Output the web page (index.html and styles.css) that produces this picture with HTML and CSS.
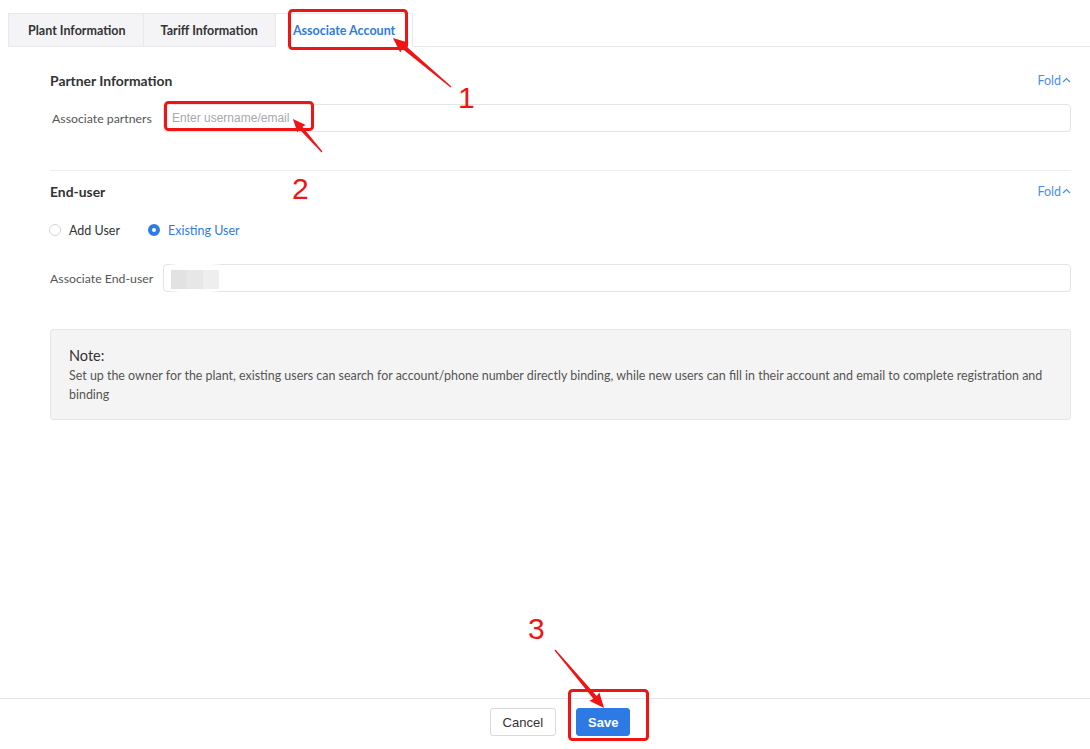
FILE: index.html
```html
<!DOCTYPE html>
<html lang="en">
<head>
  <meta charset="UTF-8">
  <meta name="viewport" content="width=device-width, initial-scale=1.0" />
  <title>Associate Account</title>
  <link rel="stylesheet" href="styles.css">
</head>
<body>
  <div class="page">
    <div class="tabs">
      <div class="tab">Plant Information</div>
      <div class="tab">Tariff Information</div>
      <div class="tab active">Associate Account</div>
    </div>

    <div class="content">
      <section class="block block-partner">
        <div class="block-head">
          <h2>Partner Information</h2>
          <a class="fold">Fold<svg width="9" height="6" viewBox="0 0 9 6"><path d="M1 5 L4.5 1.5 L8 5" fill="none" stroke="currentColor" stroke-width="1.2"/></svg></a>
        </div>
        <div class="field">
          <label class="label-indent">Associate partners</label>
          <input type="text" class="input" placeholder="Enter username/email">
        </div>
      </section>

      <section class="block">
        <div class="block-head">
          <h2>End-user</h2>
          <a class="fold">Fold<svg width="9" height="6" viewBox="0 0 9 6"><path d="M1 5 L4.5 1.5 L8 5" fill="none" stroke="currentColor" stroke-width="1.2"/></svg></a>
        </div>
        <div class="radios">
          <label class="radio"><span class="dot"></span>Add User</label>
          <label class="radio checked"><span class="dot"></span>Existing User</label>
        </div>
        <div class="field">
          <label>Associate End-user</label>
          <div class="input masked"><span class="blur"></span></div>
        </div>
      </section>

      <div class="note">
        <h3>Note:</h3>
        <p>Set up the owner for the plant, existing users can search for account/phone number directly binding, while new users can fill in their account and email to complete registration and binding</p>
      </div>
    </div>

    <div class="footer">
      <button class="btn">Cancel</button>
      <button class="btn primary">Save</button>
    </div>
  </div>

  <!-- red annotation marks drawn over the screenshot -->
  <svg class="marks" width="1090" height="749" viewBox="0 0 1090 749">
    <g fill="none" stroke="#f01414" stroke-width="3">
      <rect x="289.5" y="10.5" width="117" height="38" rx="3"/>
      <rect x="165.5" y="102.5" width="147" height="27" rx="3"/>
      <rect x="569.5" y="690.5" width="78" height="49" rx="3"/>
    </g>
    <g fill="#f01414">
      <polygon transform="translate(451 87) rotate(-139.8)" points="0,-0.6 62,-2.2 61,-6.5 76,0 61,6.5 62,2.2 0,0.6"/>
      <polygon transform="translate(322 152) rotate(-131.3)" points="0,-0.6 32,-2 31,-5.5 44,0 31,5.5 32,2 0,0.6"/>
      <polygon transform="translate(555 650) rotate(49.8)" points="0,-0.6 62,-2.2 61,-6.5 76,0 61,6.5 62,2.2 0,0.6"/>
    </g>
    <g class="mark-num" fill="#f01414">
      <text x="458" y="108">1</text>
      <text x="292" y="199">2</text>
      <text x="528" y="639">3</text>
    </g>
  </svg>
</body>
</html>
```

FILE: styles.css
```css
* {
  box-sizing: border-box;
}

body {
  margin: 0;
  position: relative;
  font-family: Lato, "Open Sans", sans-serif;
  color: #333;
  background: white;
}

.page {
  display: flex;
  flex-direction: column;
  height: 749px;
}

.tabs {
  display: flex;
  margin: 13px 0 0 8px;
  border-bottom: 1px solid #e9e9ec;
}

.tab {
  height: 34px;
  padding: 0 17px;
  display: flex;
  align-items: center;
  font-size: 12.5px;
  font-weight: 700;
  color: #333;
  background: #f4f4f6;
  border: 1px solid #e9e9ec;
  border-left: none;
  margin-bottom: -1px;
}

.tab:first-child {
  border-left: 1px solid #e9e9ec;
  padding-left: 19px;
}

.tab.active {
  background: white;
  color: #2e7be2;
  border-bottom-color: white;
}

.content {
  padding: 23px 19px 0 50px;
}

.block-partner {
  border-bottom: 1px solid #eeeef0;
  padding-bottom: 38px;
}

.block + .block {
  padding-top: 10px;
}

.block-head {
  display: flex;
  justify-content: space-between;
  align-items: center;
  height: 20px;
}

h2 {
  margin: 0;
  font-size: 13.9px;
  font-weight: 700;
  color: #333;
}

.fold {
  display: flex;
  align-items: center;
  gap: 1px;
  font-size: 12.5px;
  color: #4b8ef0;
}

.field {
  display: flex;
  align-items: center;
  margin-top: 14px;
}

.field label {
  width: 113px;
  flex-shrink: 0;
  font-size: 12.3px;
  color: #555;
}

.field .label-indent {
  padding-left: 2px;
}

.input {
  flex: 1;
  height: 28px;
  border: 1px solid #e3e3e8;
  border-radius: 4px;
  padding: 0 8px;
  font-family: "Liberation Sans", Arial, sans-serif;
  font-size: 12px;
  background: white;
}

.input::placeholder {
  color: #a8a8ae;
}

.radios {
  display: flex;
  gap: 29px;
  margin-top: 19px;
  height: 20px;
}

.radio {
  display: flex;
  align-items: center;
  gap: 8px;
  font-size: 12.5px;
  color: #333;
}

.radio .dot {
  width: 12px;
  height: 12px;
  margin-left: -1px;
  border-radius: 50%;
  border: 1px solid #d6d6da;
  background: white;
}

.radio.checked {
  color: #2e7be2;
}

.radio.checked .dot {
  border: 4px solid #2e7be2;
}

.block + .block .field {
  margin-top: 24px;
}

.masked {
  position: relative;
}

.blur {
  position: absolute;
  left: 1px;
  top: -18px;
  width: 60px;
  height: 60px;
  background: radial-gradient(circle closest-side, white 68%, rgba(255, 255, 255, 0) 100%);
}

.blur::after {
  content: "";
  position: absolute;
  left: 6px;
  top: 23px;
  width: 48px;
  height: 19px;
  background: linear-gradient(90deg, #e2e2e2 0 16px, #e7e7e7 16px 32px, #eeeeee 32px);
}

.note {
  margin-top: 37px;
  background: #f4f4f4;
  border: 1px solid #e6e6e6;
  border-radius: 3px;
  padding: 16px 6px 15px 18px;
}

.note h3 {
  margin: 0;
  font-size: 14.5px;
  line-height: 20px;
  font-weight: 400;
  color: #333;
}

.note p {
  margin: 0;
  font-size: 12.45px;
  line-height: 19px;
  color: #555;
}

.footer {
  margin-top: auto;
  border-top: 1px solid #e4e4e8;
  display: flex;
  justify-content: center;
  gap: 20px;
  padding: 9px 0 13px 30px;
}

.btn {
  height: 28px;
  padding: 0 12px;
  border: 1px solid #d9d9de;
  border-radius: 3px;
  background: white;
  font-family: "Liberation Sans", Arial, sans-serif;
  font-size: 13px;
  color: #333;
}

.btn.primary {
  padding: 0 11px;
  background: #2d7ae4;
  border-color: #2d7ae4;
  color: white;
  font-weight: bold;
}

.marks {
  position: absolute;
  top: 0;
  left: 0;
  pointer-events: none;
}

.mark-num {
  font-family: "Liberation Sans", Arial, sans-serif;
  font-size: 30px;
}
```
